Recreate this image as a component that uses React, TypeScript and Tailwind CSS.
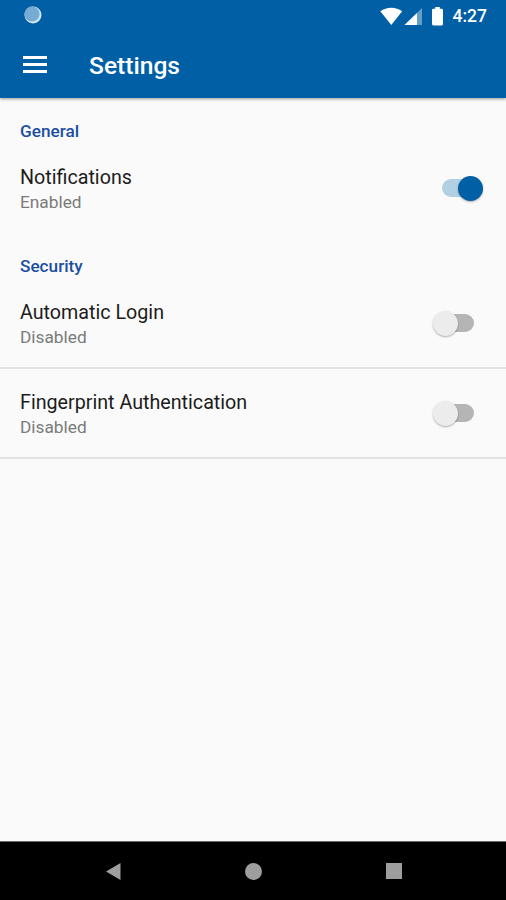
import React, { useState } from 'react';
import clsx from 'clsx';

interface SettingRowProps {
  title: string;
  enabled: boolean;
  divider?: boolean;
  onToggle: () => void;
}

const StatusBar: React.FC = () => (
  <div className="flex h-[30px] items-center justify-between pl-6 pr-[19px]">
    <svg className="h-[18px] w-[18px]" viewBox="0 0 18 18" aria-hidden="true">
      <circle cx="9" cy="9" r="8.5" fill="#d3e6f4" />
      <circle cx="8" cy="8" r="7.6" fill="#76acd3" />
    </svg>
    <div className="flex items-center pt-0.5">
      <svg className="h-[19px] w-[64px]" viewBox="0 0 64 19" aria-hidden="true">
        <path d="M0.3 4.3C6.5-.6 16-.6 22.2 4.3L11.3 18z" fill="#fff" />
        <path d="M42 1v17H24.5z" fill="#649fca" />
        <path d="M37 6V18H24.5z" fill="#fff" />
        <path d="M55.2 0h4.6v1.8h1.9q1.3 0 1.3 1.3v14q0 1.3-1.3 1.3h-8.4q-1.3 0-1.3-1.3v-14q0-1.3 1.3-1.3h1.9z" fill="#fff" />
      </svg>
      <span className="ml-[9px] text-[17.5px] font-medium leading-5 text-white">4:27</span>
    </div>
  </div>
);

const Toggle: React.FC<{ label: string; checked: boolean; onChange: () => void }> = ({
  label,
  checked,
  onChange
}) => (
  <button
    type="button"
    role="switch"
    aria-label={label}
    aria-checked={checked}
    onClick={onChange}
    className="relative h-[25px] w-[50px] shrink-0"
  >
    <span
      className={clsx(
        'absolute left-[9px] top-[3px] h-[18px] w-8 rounded-full',
        checked ? 'bg-[#b3cfe2]' : 'bg-[#b5b5b5]'
      )}
    />
    <span
      className={clsx(
        'absolute top-0 h-[25px] w-[25px] rounded-full shadow-[0_1px_2px_rgba(0,0,0,0.3)]',
        checked ? 'left-[25px] bg-[#005fa5]' : 'left-0 bg-[#ececec]'
      )}
    />
  </button>
);

const SectionHeader: React.FC<{ children: React.ReactNode }> = ({ children }) => (
  <h2 className="h-[45px] px-5 pt-[22px] text-[17.2px] font-medium leading-5 text-[#1a4fa0]">
    {children}
  </h2>
);

const SettingRow: React.FC<SettingRowProps> = ({ title, enabled, divider, onToggle }) => (
  <div
    className={clsx(
      'flex h-[90px] items-center justify-between border-b-2 pl-5 pr-[23px]',
      divider ? 'border-[#e3e3e3]' : 'border-transparent'
    )}
  >
    <div className="pt-1">
      <p className="text-[19.7px] leading-[25px] text-[#1c1c1c]">{title}</p>
      <p className="text-[17.3px] leading-[25px] text-[#7b7b7b]">{enabled ? 'Enabled' : 'Disabled'}</p>
    </div>
    <Toggle label={title} checked={enabled} onChange={onToggle} />
  </div>
);

export default function App() {
  const [notifications, setNotifications] = useState(true);
  const [autoLogin, setAutoLogin] = useState(false);
  const [fingerprint, setFingerprint] = useState(false);

  return (
    <div className="flex h-[900px] w-[506px] flex-col overflow-hidden bg-[#fafafa] font-['Roboto',sans-serif]">
      <header className="z-10 h-[98px] shrink-0 bg-[#005fa5] shadow-[0_1px_3px_rgba(0,0,0,0.4)]">
        <StatusBar />
        <div className="flex h-[68px] items-center pl-[23px]">
          <button type="button" aria-label="Menu" className="flex w-6 flex-col gap-1">
            <span className="h-[3px] bg-white" />
            <span className="h-[3px] bg-white" />
            <span className="h-[3px] bg-white" />
          </button>
          <h1 className="ml-[42px] pt-1 text-[24.6px] font-medium leading-8 text-white">Settings</h1>
        </div>
      </header>

      <main className="flex-1 pt-px">
        <SectionHeader>General</SectionHeader>
        <SettingRow
          title="Notifications"
          enabled={notifications}
          onToggle={() => setNotifications(!notifications)}
        />
        <SectionHeader>Security</SectionHeader>
        <SettingRow
          title="Automatic Login"
          enabled={autoLogin}
          divider
          onToggle={() => setAutoLogin(!autoLogin)}
        />
        <SettingRow
          title="Fingerprint Authentication"
          enabled={fingerprint}
          divider
          onToggle={() => setFingerprint(!fingerprint)}
        />
      </main>

      <nav className="flex h-[59px] shrink-0 items-center justify-center gap-[124px] border-t border-[#6b6b6b] bg-black">
        <svg className="h-[17px] w-4" viewBox="0 0 16 17" fill="#9e9e9e" aria-hidden="true">
          <path d="M15.5 0v17L1 8.5z" />
        </svg>
        <span className="h-[17px] w-[17px] rounded-full bg-[#9e9e9e]" />
        <span className="h-4 w-4 bg-[#9e9e9e]" />
      </nav>
    </div>
  );
}
